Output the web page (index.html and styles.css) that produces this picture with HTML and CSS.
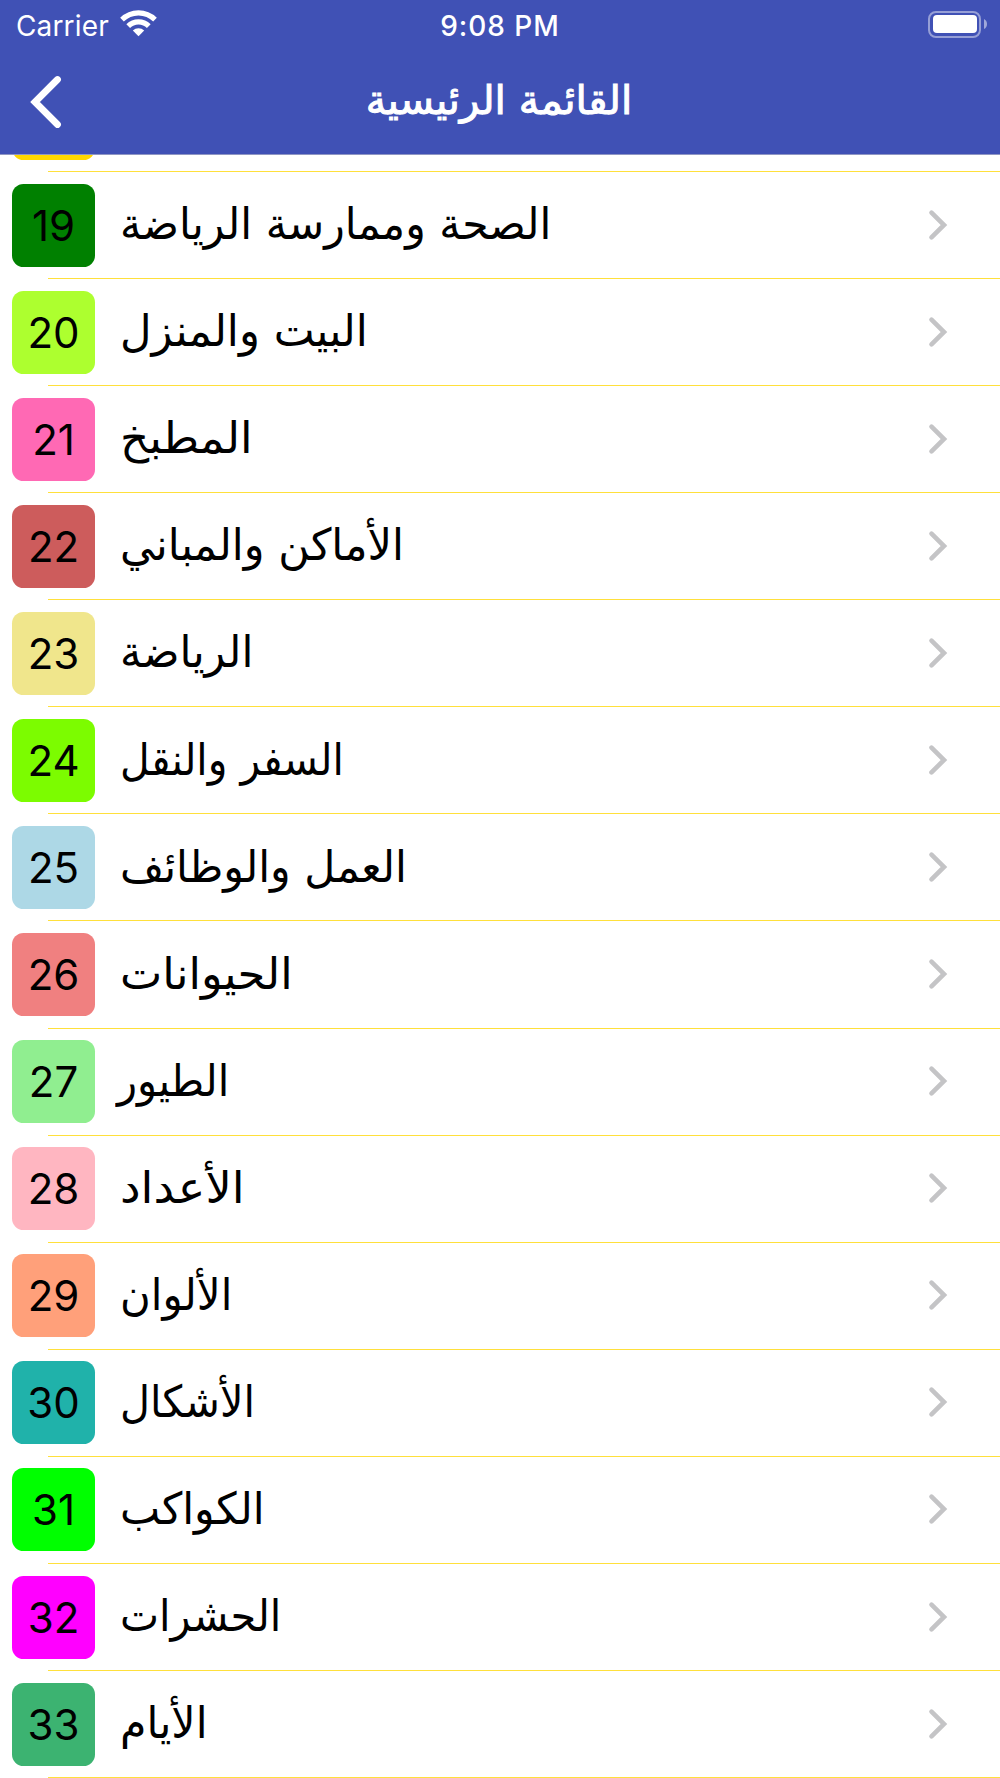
FILE: index.html
```
<!DOCTYPE html>
<html lang="ar">
<head>
<meta charset="utf-8">
<title>القائمة الرئيسية</title>
<link rel="stylesheet" href="styles.css">
</head>
<body>
<svg class="defs" width="0" height="0"><symbol id="chevron" viewBox="0 0 20 32"><path d="M3.5 3.6 16 16 3.5 28.4"/></symbol></svg>
<header class="header">
  <div class="status">
    <div class="carrier"><span class="carrier-name">Carrier</span>
      <svg class="wifi" viewBox="0 0 37 28" width="37" height="28"><g fill="none" stroke="#fff" stroke-width="5.2"><path d="M2 10.6a23.4 23.4 0 0 1 33 0"/><path d="M8.2 17.1a14.5 14.5 0 0 1 20.6 0"/></g><path fill="#fff" d="M18.500 27.300 12.800 21.500a8.200 8.200 0 0 1 11.400 0z"/></svg>
    </div>
    <time class="clock">9:08 PM</time>
    <div class="battery"><span class="cell"><span class="charge"></span></span><svg width="3" height="10" viewBox="0 0 3 10"><path d="M0 0q3 1.500 3 5t-3 5z" fill="#fff" fill-opacity=".5"/></svg></div>
  </div>
  <nav class="nav">
    <svg class="back" viewBox="0 0 34 54" width="34" height="54"><path d="M29.500 4.500 7 27 29.500 49.500"/></svg>
    <h1 class="title">القائمة الرئيسية</h1>
  </nav>
</header>
<main class="list">
  <div class="row partial"><span class="badge" style="background:#ffd700"></span></div>
  <div class="row"><span class="badge" style="background:#008000">19</span><bdi class="label" style="--fit:.968">الصحة وممارسة الرياضة</bdi><svg class="more"><use href="#chevron"/></svg></div>
  <div class="row"><span class="badge" style="background:#adff2f">20</span><bdi class="label" style="--fit:.986">البيت والمنزل</bdi><svg class="more"><use href="#chevron"/></svg></div>
  <div class="row"><span class="badge" style="background:#ff69b4">21</span><bdi class="label" style="--fit:1.03">المطبخ</bdi><svg class="more"><use href="#chevron"/></svg></div>
  <div class="row"><span class="badge" style="background:#cd5c5c">22</span><bdi class="label" style="--fit:.977">الأماكن والمباني</bdi><svg class="more"><use href="#chevron"/></svg></div>
  <div class="row"><span class="badge" style="background:#f0e68c">23</span><bdi class="label" style="--fit:.977">الرياضة</bdi><svg class="more"><use href="#chevron"/></svg></div>
  <div class="row"><span class="badge" style="background:#7cfc00">24</span><bdi class="label" style="--fit:.928">السفر والنقل</bdi><svg class="more"><use href="#chevron"/></svg></div>
  <div class="row"><span class="badge" style="background:#add8e6">25</span><bdi class="label" style="--fit:.971">العمل والوظائف</bdi><svg class="more"><use href="#chevron"/></svg></div>
  <div class="row"><span class="badge" style="background:#f08080">26</span><bdi class="label" style="--fit:1.02">الحيوانات</bdi><svg class="more"><use href="#chevron"/></svg></div>
  <div class="row"><span class="badge" style="background:#90ee90">27</span><bdi class="label overhang" style="--fit:.944">الطيور</bdi><svg class="more"><use href="#chevron"/></svg></div>
  <div class="row"><span class="badge" style="background:#ffb6c1">28</span><bdi class="label" style="--fit:1.052">الأعداد</bdi><svg class="more"><use href="#chevron"/></svg></div>
  <div class="row"><span class="badge" style="background:#ffa07a">29</span><bdi class="label" style="--fit:.952">الألوان</bdi><svg class="more"><use href="#chevron"/></svg></div>
  <div class="row"><span class="badge" style="background:#20b2aa">30</span><bdi class="label" style="--fit:.938">الأشكال</bdi><svg class="more"><use href="#chevron"/></svg></div>
  <div class="row"><span class="badge" style="background:#00ff00">31</span><bdi class="label" style="--fit:.970">الكواكب</bdi><svg class="more"><use href="#chevron"/></svg></div>
  <div class="row"><span class="badge" style="background:#ff00ff">32</span><bdi class="label" style="--fit:.942">الحشرات</bdi><svg class="more"><use href="#chevron"/></svg></div>
  <div class="row"><span class="badge" style="background:#3cb371">33</span><bdi class="label" style="--fit:.970">الأيام</bdi><svg class="more"><use href="#chevron"/></svg></div>
</main>
</body>
</html>
```
FILE: styles.css
```
* { box-sizing: border-box; }
body {
  margin: 0;
  height: 1778px;
  overflow: hidden;
  background: #fff;
  color: #000;
  font-family: Inter, "DejaVu Sans", sans-serif;
}
svg { display: block; flex: none; }
.defs { display: none; }

.header {
  height: 155px;
  background: #4051b5;
  border-bottom: 1px solid #8f96c4;
  color: #fff;
}
.status {
  display: grid;
  grid-template-columns: 1fr auto 1fr;
  align-items: center;
  height: 50px;
  padding: 0 13px 0 16px;
}
.carrier { display: flex; align-items: center; gap: 10px; }
.carrier-name { font-size: 28px; line-height: 34px; width: 94px; white-space: nowrap; padding-top: 1px; letter-spacing: .15px; }
.wifi { margin-bottom: 4px; }
.clock { font-size: 28px; font-weight: 500; line-height: 34px; padding-top: 1px; margin-right: 3px; letter-spacing: .95px; }
.battery { display: flex; justify-content: flex-end; align-items: center; gap: 3px; margin-bottom: 2px; }
.cell { width: 53px; height: 27px; border: 2px solid rgba(255, 255, 255, .45); border-radius: 8px; padding: 2.500px 2.500px; }
.charge { display: block; height: 100%; border-radius: 4px; background: #fff; }

.nav {
  display: grid;
  grid-template-columns: 1fr auto 1fr;
  align-items: center;
  height: 104px;
  padding: 0 28px;
}
.back path { fill: none; stroke: #fff; stroke-width: 6.800px; stroke-linecap: round; stroke-linejoin: miter; }
.title {
  margin: 0 3px 5px 0;
  font: 400 40px/56px "DejaVu Sans", sans-serif;
  transform: scaleX(1.018);
  -webkit-text-stroke: 1px #fff;
}

.list { height: 1623px; overflow: hidden; }
.row {
  display: flex;
  align-items: center;
  height: 107.070px;
  padding: 0 52px 1px 12px;
  background: linear-gradient(#ffe03b, #ffe03b) 48px 100% / 100% 1.200px no-repeat;
}
.partial { height: 17.200px; align-items: flex-end; padding-bottom: 12.500px; }
.badge {
  flex: none;
  width: 83px;
  height: 83px;
  border-radius: 11.500px;
  text-align: center;
  font-size: 42px;
  line-height: 84px;
}
.label {
  margin: 0 auto 2px 25px;
  font: 44px/60px "DejaVu Sans", sans-serif;
  white-space: nowrap;
  transform: scaleX(var(--fit));
  transform-origin: left;
}
.overhang { margin-left: 22px; }
.more { width: 20px; height: 32px; margin-bottom: 1px; fill: none; stroke: #c4c4c6; stroke-width: 4.600px; stroke-linecap: round; stroke-linejoin: miter; }
```
